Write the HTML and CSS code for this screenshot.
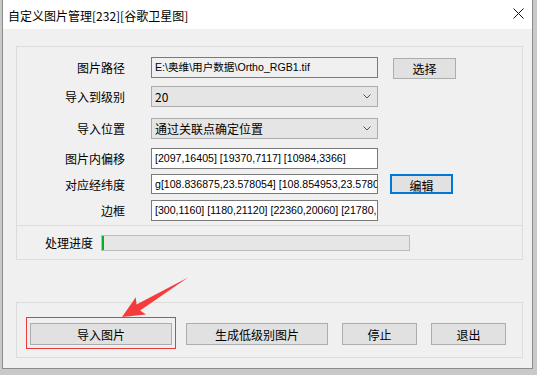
FILE: index.html
```html
<!DOCTYPE html>
<html lang="zh-CN">
<head>
<meta charset="UTF-8" />
<title>自定义图片管理</title>
<link rel="stylesheet" href="styles.css">
</head>
<body>

<!-- Dialog window -->
<div class="dlgWindow">
  <div class="dlgTitlebar">
    <span class="dlgTitle">自定义图片管理[232][谷歌卫星图]</span>
    <svg class="dlgClose" width="11" height="11" viewBox="0 0 11 11">
      <path d="M0.5 0.5 L10.5 10.5 M10.5 0.5 L0.5 10.5" stroke="#111" stroke-width="1" fill="none" />
    </svg>
  </div>

  <div class="dlgClient">

    <!-- Settings group -->
    <div class="dlgGroup">
      <div class="dlgForm">
        <div class="dlgRow">
          <span class="dlgLabel">图片路径</span>
          <div class="dlgField readonly">E:\奥维\用户数据\Ortho_RGB1.tif</div>
          <button class="dlgBtn sideBtn">选择</button>
        </div>
        <div class="dlgRow r2">
          <span class="dlgLabel">导入到级别</span>
          <div class="dlgField combo">20
            <svg class="chev" width="8" height="5" viewBox="0 0 8 5"><polyline points="0.5,0.5 4,4 7.5,0.5" fill="none" stroke="#555" stroke-width="1" /></svg>
          </div>
        </div>
        <div class="dlgRow r3">
          <span class="dlgLabel">导入位置</span>
          <div class="dlgField combo">通过关联点确定位置
            <svg class="chev" width="8" height="5" viewBox="0 0 8 5"><polyline points="0.5,0.5 4,4 7.5,0.5" fill="none" stroke="#555" stroke-width="1" /></svg>
          </div>
        </div>
        <div class="dlgRow r4">
          <span class="dlgLabel">图片内偏移</span>
          <div class="dlgField">[2097,16405] [19370,7117] [10984,3366]</div>
        </div>
        <div class="dlgRow r5">
          <span class="dlgLabel">对应经纬度</span>
          <div class="dlgField">g[108.836875,23.578054] [108.854953,23.578054]</div>
          <button class="dlgBtn sideBtn focused">编辑</button>
        </div>
        <div class="dlgRow r6">
          <span class="dlgLabel">边框</span>
          <div class="dlgField">[300,1160] [1180,21120] [22360,20060] [21780,1120]</div>
        </div>
      </div>

      <div class="dlgProgressRow">
        <span class="progLabel">处理进度</span>
        <div class="progBar"><div class="progFill" style="width:2px"></div></div>
      </div>
    </div>

    <!-- Action buttons -->
    <div class="dlgGroup actions">
      <button class="dlgBtn wide">导入图片</button>
      <button class="dlgBtn wide">生成低级别图片</button>
      <button class="dlgBtn narrow">停止</button>
      <button class="dlgBtn narrow">退出</button>
    </div>

  </div>
</div>

<!-- Annotation drawn over the screenshot -->
<svg class="markup" width="537" height="375" viewBox="0 0 537 375">
  <rect x="26.5" y="317.5" width="149" height="31" fill="none" stroke="#e8393b" stroke-width="1" />
  <polygon points="122,317 135.8,297.3 136.5,304.4 188,277.6 140.1,310.4 146,314.5" fill="#f53c3c" />
</svg>

</body>
</html>
```

FILE: styles.css
```css
/* Page behind the dialog */
body {
  margin: 0;
  width: 537px;
  height: 375px;
  overflow: hidden;
  position: relative;
  background: #c9c9c9;
  font-family: "Noto Sans CJK SC", "Liberation Sans", sans-serif;
  font-size: 12px;
  color: #000;
}

/* Dialog window */
.dlgWindow {
  box-sizing: border-box;
  width: 531px;
  height: 369px;
  margin-left: 2px;
  background: #f0f0f0;
  border: 1px solid #8c8c8c;
  border-top: none;
}

.dlgTitlebar {
  height: 29px;
  background: #fff;
  display: flex;
  align-items: center;
  justify-content: space-between;
  padding: 0 8px 0 5px;
}

.dlgTitle {
  line-height: 29px;
  position: relative;
  top: 1px;
}

.dlgClose {
  display: block;
  margin-top: -2px;
}

.dlgClient {
  padding: 17px 9px 0 13px;
}

/* Group boxes */
.dlgGroup {
  border: 1px solid #dcdcdc;
}

.dlgForm {
  padding: 10px 0 4px 0;
}

.dlgRow {
  display: flex;
  align-items: center;
  height: 21px;
}

.dlgRow.r2 { margin-top: 8px; }
.dlgRow.r3 { margin-top: 11px; }
.dlgRow.r4 { margin-top: 9px; }
.dlgRow.r5 { margin-top: 5px; height: 20px; }
.dlgRow.r6 { margin-top: 6px; }

.dlgLabel {
  width: 108px;
  text-align: right;
  white-space: nowrap;
  margin-right: 26px;
}

/* Text fields */
.dlgField {
  box-sizing: border-box;
  position: relative;
  width: 227px;
  height: 100%;
  padding: 0 3px;
  background: #fff;
  border: 1px solid #7a7a7a;
  font-family: "Liberation Sans", "Noto Sans CJK SC", sans-serif;
  font-size: 10.6px;
  line-height: 19px;
  white-space: nowrap;
  overflow: hidden;
}

.dlgField.readonly {
  background: #f0f0f0;
}

.dlgField.combo {
  background: #e5e5e5;
  border-color: #acacac;
  font-family: "Noto Sans CJK SC", "Liberation Sans", sans-serif;
  font-size: 12px;
}

.chev {
  position: absolute;
  right: 6px;
  top: 7px;
}

/* Buttons */
.dlgBtn {
  box-sizing: border-box;
  height: 21px;
  padding: 0;
  background: #e1e1e1;
  border: 1px solid #adadad;
  font-family: "Noto Sans CJK SC", "Liberation Sans", sans-serif;
  font-size: 12px;
  line-height: 19px;
  color: #000;
}

.sideBtn {
  width: 63px;
  margin-left: 15px;
  margin-top: 2px;
}

.sideBtn.focused {
  margin-left: 12px;
  border: 2px solid #0078d7;
  height: 20px;
  margin-top: -1px;
}

/* Progress section */
.dlgProgressRow {
  border-top: 1px solid #dcdcdc;
  height: 33px;
  display: flex;
  align-items: center;
  padding-left: 28px;
}

.progLabel {
  width: 56px;
}

.progBar {
  box-sizing: border-box;
  width: 309px;
  height: 16px;
  background: #e6e6e6;
  border: 1px solid #bcbcbc;
}

.progFill {
  height: 100%;
  background: #06b025;
}

/* Action buttons group */
.dlgGroup.actions {
  margin-top: 42px;
  height: 56px;
  box-sizing: border-box;
  display: flex;
  gap: 14px;
  padding: 20px 0 0 13px;
}

.wide { width: 142px; height: 22px; }
.narrow { width: 75px; height: 22px; }

/* Red annotation overlay */
.markup {
  position: absolute;
  left: 0;
  top: 0;
  pointer-events: none;
}
```
